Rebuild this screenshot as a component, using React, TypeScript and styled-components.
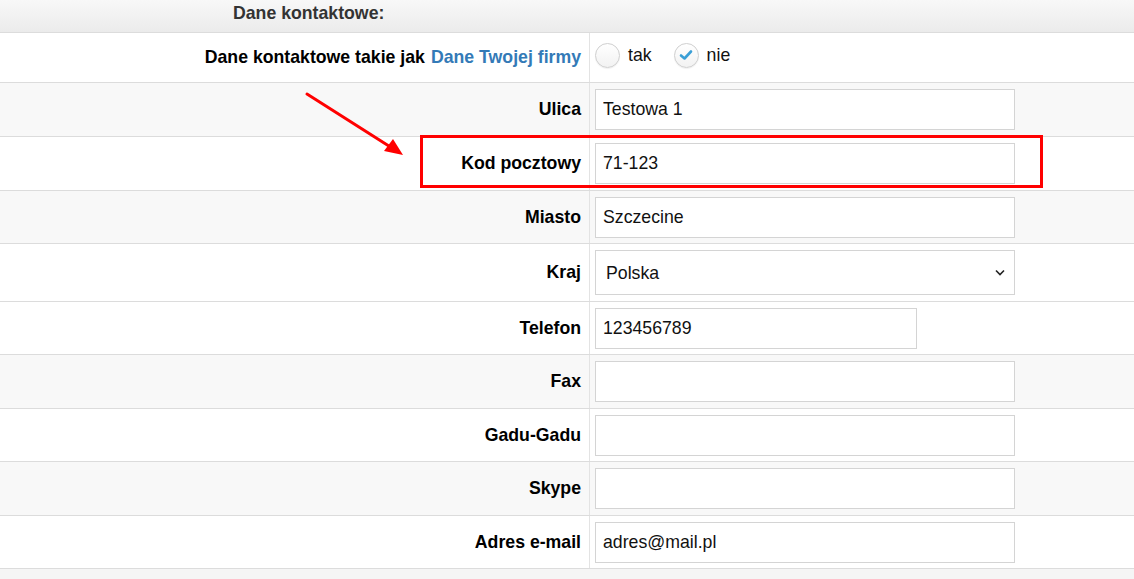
import { createGlobalStyle, styled } from "styled-components";

const GlobalStyle = createGlobalStyle`
    html, body {
        margin: 0;
        padding: 0;
        background: #fff;
        font-family: "Liberation Sans", Arial, sans-serif;
    }
`;

const Page = styled.div`
    position: relative;
    width: 1134px;
    height: 579px;
    overflow: hidden;
    background: #f5f5f5;
`;

const Header = styled.div`
    height: 33px;
    box-sizing: border-box;
    padding: 3px 0 0 233px;
    background: linear-gradient(#f8f8f8, #ebebeb);
    border-bottom: 1px solid #dcdcdc;
    font-size: 17.7px;
    line-height: 20px;
    font-weight: bold;
    color: #333;
`;

const Row = styled.div<{ $grey?: boolean; $height: number }>`
    display: grid;
    grid-template-columns: 589px 1fr;
    box-sizing: border-box;
    height: ${(p) => p.$height}px;
    background: ${(p) => (p.$grey ? "#f8f8f8" : "#fff")};
    border-bottom: 1px solid #dcdcdc;
`;

const Label = styled.div`
    display: flex;
    align-items: center;
    justify-content: flex-end;
    padding-right: 8px;
    font-size: 17.7px;
    font-weight: bold;
    color: #000;
    white-space: nowrap;
`;

const Link = styled.span`
    color: #337ab7;
    margin-left: 6px;
`;

const Field = styled.div`
    display: flex;
    align-items: center;
    border-left: 1px solid #e3e3e3;
    padding-left: 5px;
`;

const TextInput = styled.input<{ $width?: number }>`
    box-sizing: border-box;
    width: ${(p) => p.$width ?? 420}px;
    height: 41px;
    padding: 0 7px;
    border: 1px solid #d4d4d4;
    background: #fff;
    font-family: "Liberation Sans", Arial, sans-serif;
    font-size: 17.7px;
    color: #111;
    outline: none;
`;

const SelectWrap = styled.div`
    position: relative;
    width: 420px;
    height: 45px;
`;

const Select = styled.select`
    appearance: none;
    box-sizing: border-box;
    width: 100%;
    height: 100%;
    padding: 0 10px;
    border: 1px solid #d4d4d4;
    border-radius: 0;
    background: #fff;
    font-family: "Liberation Sans", Arial, sans-serif;
    font-size: 17.7px;
    color: #111;
    outline: none;
`;

const Chevron = styled.svg`
    position: absolute;
    right: 10px;
    top: 19px;
    pointer-events: none;
`;

const RadioGroup = styled.div`
    display: flex;
    align-items: center;
    gap: 8px;
    margin-top: -5px;
    font-size: 17.7px;
    color: #111;
`;

const RadioCircle = styled.span`
    display: inline-flex;
    align-items: center;
    justify-content: center;
    width: 25px;
    height: 25px;
    box-sizing: border-box;
    border-radius: 50%;
    border: 1px solid #cfcfcf;
    background: linear-gradient(#fff, #f2f2f2);
    box-shadow: 0 1px 1px rgba(0, 0, 0, 0.06);
`;

const RadioText = styled.span`
    margin-right: 14px;
`;

const Highlight = styled.div`
    position: absolute;
    left: 420px;
    top: 135px;
    width: 623px;
    height: 53px;
    box-sizing: border-box;
    border: 3px solid #ff0000;
    pointer-events: none;
`;

const Arrow = styled.svg`
    position: absolute;
    left: 300px;
    top: 88px;
    pointer-events: none;
`;

interface FieldRow {
    label: string;
    value: string;
    grey?: boolean;
    width?: number;
    height: number;
}

const rowsBefore: FieldRow[] = [
    { label: "Ulica", value: "Testowa 1", grey: true, height: 54 },
    { label: "Kod pocztowy", value: "71-123", height: 54 },
    { label: "Miasto", value: "Szczecine", grey: true, height: 53 },
];

const rowsAfter: FieldRow[] = [
    { label: "Telefon", value: "123456789", width: 322, height: 53 },
    { label: "Fax", value: "", grey: true, height: 54 },
    { label: "Gadu-Gadu", value: "", height: 53 },
    { label: "Skype", value: "", grey: true, height: 54 },
    { label: "Adres e-mail", value: "adres@mail.pl", height: 53 },
];

const InputRow = ({ row }: { row: FieldRow }) => (
    <Row $grey={row.grey} $height={row.height}>
        <Label>{row.label}</Label>
        <Field>
            <TextInput $width={row.width} defaultValue={row.value} />
        </Field>
    </Row>
);

export default function App() {
    return (
        <Page>
            <GlobalStyle />
            <Header>Dane kontaktowe:</Header>
            <Row $height={50}>
                <Label>
                    Dane kontaktowe takie jak<Link>Dane Twojej firmy</Link>
                </Label>
                <Field>
                    <RadioGroup>
                        <RadioCircle />
                        <RadioText>tak</RadioText>
                        <RadioCircle>
                            <svg width="14" height="12" viewBox="0 0 14 12">
                                <path d="M2 6.5 L5.5 9.5 L12 2.5" fill="none" stroke="#3a9fd6" strokeWidth="2.6" strokeLinecap="round" strokeLinejoin="round" />
                            </svg>
                        </RadioCircle>
                        <RadioText>nie</RadioText>
                    </RadioGroup>
                </Field>
            </Row>
            {rowsBefore.map((r) => (
                <InputRow key={r.label} row={r} />
            ))}
            <Row $height={58}>
                <Label>Kraj</Label>
                <Field>
                    <SelectWrap>
                        <Select defaultValue="Polska">
                            <option>Polska</option>
                        </Select>
                        <Chevron width="10" height="7" viewBox="0 0 10 7">
                            <path d="M1 1.5 L5 5.5 L9 1.5" fill="none" stroke="#222" strokeWidth="1.6" />
                        </Chevron>
                    </SelectWrap>
                </Field>
            </Row>
            {rowsAfter.map((r) => (
                <InputRow key={r.label} row={r} />
            ))}
            <Highlight />
            <Arrow width="110" height="75" viewBox="0 0 110 75">
                <line x1="7" y1="6" x2="92" y2="60" stroke="#f00" strokeWidth="3" strokeLinecap="round" />
                <polygon points="103,67 84,63 93,51" fill="#f00" />
            </Arrow>
        </Page>
    );
}
